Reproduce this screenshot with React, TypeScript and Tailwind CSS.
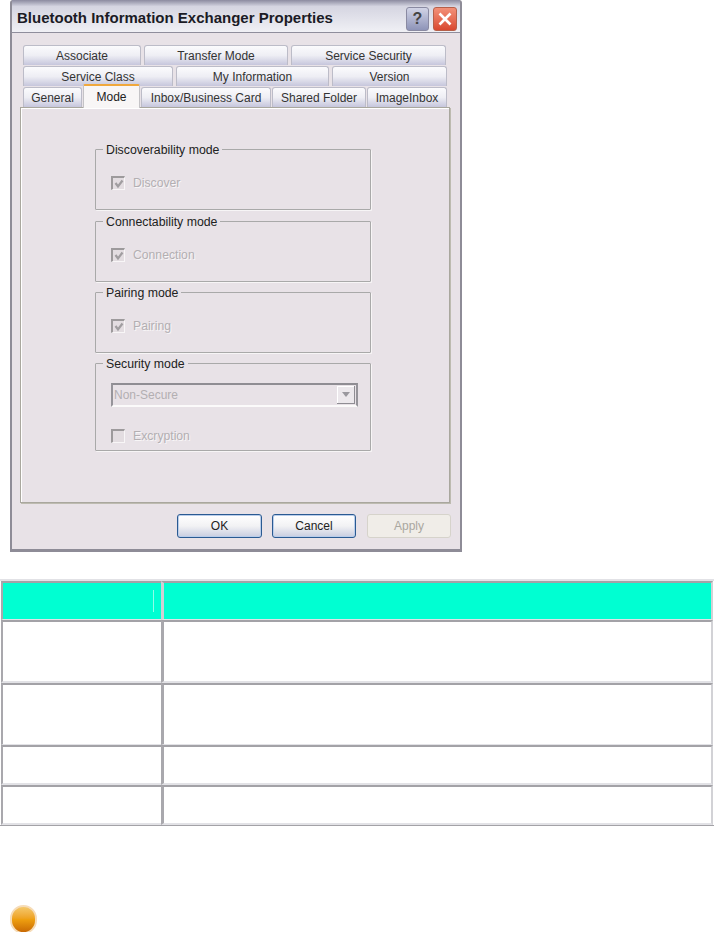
const ui = { fontFamily: '"Liberation Sans", Arial, sans-serif' };

function Tab({ label, width, active }: { label: string; width: number; active?: boolean }) {
  return (
    <div
      style={{ width }}
      className={
        active
          ? 'z-10 -mb-[1px] -mt-[3px] flex h-[24px] shrink-0 items-start justify-center rounded-t-[2px] border-x border-t-2 border-x-[#c4c3c6] border-t-[#f0a83c] bg-[#f8f6f6] pt-[4px] text-[12px] leading-[14px] text-[#222]'
          : 'flex h-[20px] shrink-0 items-center justify-center rounded-t-[3px] border border-b-0 border-[#bcbcc8] bg-gradient-to-b from-[#fbfbfd] via-[#eeeef4] to-[#c6c6dc] text-[12px] text-[#333]'
      }
    >
      {label}
    </div>
  );
}

function Check({ checked }: { checked?: boolean }) {
  return (
    <span className="flex h-[14px] w-[14px] shrink-0 items-center justify-center border-b border-l-2 border-r border-t-2 border-b-[#f8f6f7] border-l-[#9d9a9c] border-r-[#f8f6f7] border-t-[#9d9a9c] bg-[#e3dde1]">
      {checked && (
        <svg width="10" height="10" viewBox="0 0 10 10">
          <path d="M1.5 4 L4 7.5 L8.5 1.5" fill="none" stroke="#a09da0" strokeWidth="2.2" />
        </svg>
      )}
    </span>
  );
}

function Group({ title, height, mt, children }: { title: string; height: number; mt: number; children: React.ReactNode }) {
  return (
    <div style={{ height, marginTop: mt }} className="relative rounded-[1px] border border-[#a9a9a9] shadow-[1px_1px_0_#f7f5f6]">
      <span className="absolute -top-[7px] left-[7px] bg-[#e8e2e7] px-[3px] text-[12.3px] leading-[15px] text-[#222]">{title}</span>
      {children}
    </div>
  );
}

function CheckRow({ label, checked, pt }: { label: string; checked?: boolean; pt: number }) {
  return (
    <div style={{ paddingTop: pt }} className="flex items-center gap-[8px] pl-[15px] text-[12.2px] leading-[14px] text-[#b3afb2]">
      <Check checked={checked} />
      <span className="[text-shadow:1px_1px_0_#f8f6f7]">{label}</span>
    </div>
  );
}

function DialogButton({ label, width, disabled }: { label: string; width: number; disabled?: boolean }) {
  return (
    <div
      style={{ width }}
      className={
        disabled
          ? 'flex h-[24px] items-center justify-center rounded-[3px] border border-[#d6d3cb] bg-[#f0ede8] text-[12px] text-[#aaa7a0]'
          : 'flex h-[24px] items-center justify-center rounded-[3px] border border-[#2a5a92] bg-gradient-to-b from-[#ffffff] via-[#f2f2f4] to-[#c8cde0] text-[12px] text-[#222] shadow-[inset_0_0_0_1px_#b9cdea]'
      }
    >
      {label}
    </div>
  );
}

function Row({ height, header, thin }: { height: number; header?: boolean; thin?: boolean }) {
  const base = thin ? 'border-t-2 border-b border-t-[#a3a2a7] border-b-[#e2e2e6]' : 'border-t-2 border-b-2 border-t-[#a3a2a7] border-b-[#e2e2e6]';
  const fill = header ? 'bg-[#00ffd2]' : 'bg-white';
  return (
    <div style={{ height }} className="flex">
      <div className={`relative w-[160px] shrink-0 border-l-2 border-l-[#a9a8ad] ${base} ${fill}`}>
        {header && <span className="absolute right-[7px] top-[7px] h-[22px] w-px bg-[#8ffde8]" />}
      </div>
      <div className={`flex-1 border-l-[3px] border-r-2 border-r-[#d2d2d6] ${header ? 'border-l-[#cfcfd3]' : 'border-l-[#a9a8ad]'} ${base} ${fill}`} />
    </div>
  );
}

export default function App() {
  return (
    <div style={ui} className="h-[932px] w-[714px] overflow-hidden bg-white">
      <div className="ml-[10px] h-[552px] w-[452px] rounded-t-[3px] border-x-2 border-b-[3px] border-x-[#8e8c97] border-b-[#8e8c97] bg-[#e8e2e7]">
        {/* title bar */}
        <div className="flex h-[33px] items-center justify-between border-b border-[#8f8e9c] bg-gradient-to-b from-[#8c8ba0] via-[#d5d5e1] via-20% to-[#f0f0f5] pl-[5px] pr-[3px] pt-[5px]">
          <span className="text-[15px] font-bold text-[#1b1b25]">Bluetooth Information Exchanger Properties</span>
          <div className="flex gap-[4px]">
            <div className="flex h-[24px] w-[23px] items-center justify-center rounded-[3px] border border-[#8a8aa2] bg-gradient-to-b from-[#d2d4e6] to-[#8e94b8] text-[16px] font-bold text-[#444]">?</div>
            <div className="flex h-[24px] w-[24px] items-center justify-center rounded-[3px] border border-[#b5604a] bg-gradient-to-b from-[#f29078] to-[#d9472f]">
              <svg width="16" height="16" viewBox="0 0 16 16">
                <path d="M2.5 2.5 L13.5 13.5 M13.5 2.5 L2.5 13.5" stroke="#fff" strokeWidth="2.6" />
              </svg>
            </div>
          </div>
        </div>

        {/* tabs */}
        <div className="px-[8px] pt-[12px]">
          <div className="flex gap-[3px] pl-[3px]">
            <Tab label="Associate" width={118} />
            <Tab label="Transfer Mode" width={144} />
            <Tab label="Service Security" width={155} />
          </div>
          <div className="mt-[1px] flex gap-[3px] pl-[3px]">
            <Tab label="Service Class" width={150} />
            <Tab label="My Information" width={153} />
            <Tab label="Version" width={115} />
          </div>
          <div className="mt-[1px] flex gap-[1px] pl-[3px]">
            <Tab label="General" width={59} />
            <Tab label="Mode" width={57} active />
            <Tab label="Inbox/Business Card" width={130} />
            <Tab label="Shared Folder" width={94} />
            <Tab label="ImageInbox" width={80} />
          </div>

          {/* tab panel */}
          <div className="h-[396px] w-[430px] border border-[#a9a79e] bg-[#e8e2e7] pl-[74px] pr-[78px] pt-[41px] shadow-[inset_1px_1px_0_#fff,1px_1px_0_#bdbbb0]">
            <Group title="Discoverability mode" height={61} mt={0}>
              <CheckRow label="Discover" checked pt={26} />
            </Group>
            <Group title="Connectability mode" height={61} mt={11}>
              <CheckRow label="Connection" checked pt={26} />
            </Group>
            <Group title="Pairing mode" height={61} mt={10}>
              <CheckRow label="Pairing" checked pt={26} />
            </Group>
            <Group title="Security mode" height={88} mt={10}>
              <div className="ml-[15px] mr-[12px] mt-[19px] flex h-[24px] items-center justify-between border-2 border-b-[#fbfafa] border-l-[#96949a] border-r-[#96949a] border-t-[#8f8d93] pl-[1px] pr-[1px] text-[12px] text-[#b3afb2]">
                <span>Non-Secure</span>
                <span className="flex h-[18px] w-[18px] items-center justify-center border-b border-r border-[#8f8d93] bg-[#ece8ec] shadow-[inset_1px_1px_0_#fff]">
                  <svg width="8" height="5" viewBox="0 0 8 5">
                    <path d="M0 0 H8 L4 5 Z" fill="#9a989e" />
                  </svg>
                </span>
              </div>
              <CheckRow label="Excryption" pt={22} />
            </Group>
          </div>
        </div>

        {/* buttons */}
        <div className="mt-[11px] flex pl-[165px]">
          <DialogButton label="OK" width={85} />
          <div className="w-[10px]" />
          <DialogButton label="Cancel" width={84} />
          <div className="w-[11px]" />
          <DialogButton label="Apply" width={84} disabled />
        </div>
      </div>

      {/* table */}
      <div className="mt-[27px] border-b border-t-2 border-b-[#a3a2a7] border-t-[#e2e2e6] px-[1px]">
        <Row height={39} header thin />
        <Row height={63} />
        <Row height={62} thin />
        <Row height={40} />
        <Row height={40} />
      </div>

      {/* bullet */}
      <div className="ml-[10px] mt-[79px] h-[29px] w-[27px] rounded-full border-2 border-[#f6dcb8] bg-gradient-to-b from-[#f4c868] via-[#ee9f10] to-[#c96a04]" />
    </div>
  );
}
